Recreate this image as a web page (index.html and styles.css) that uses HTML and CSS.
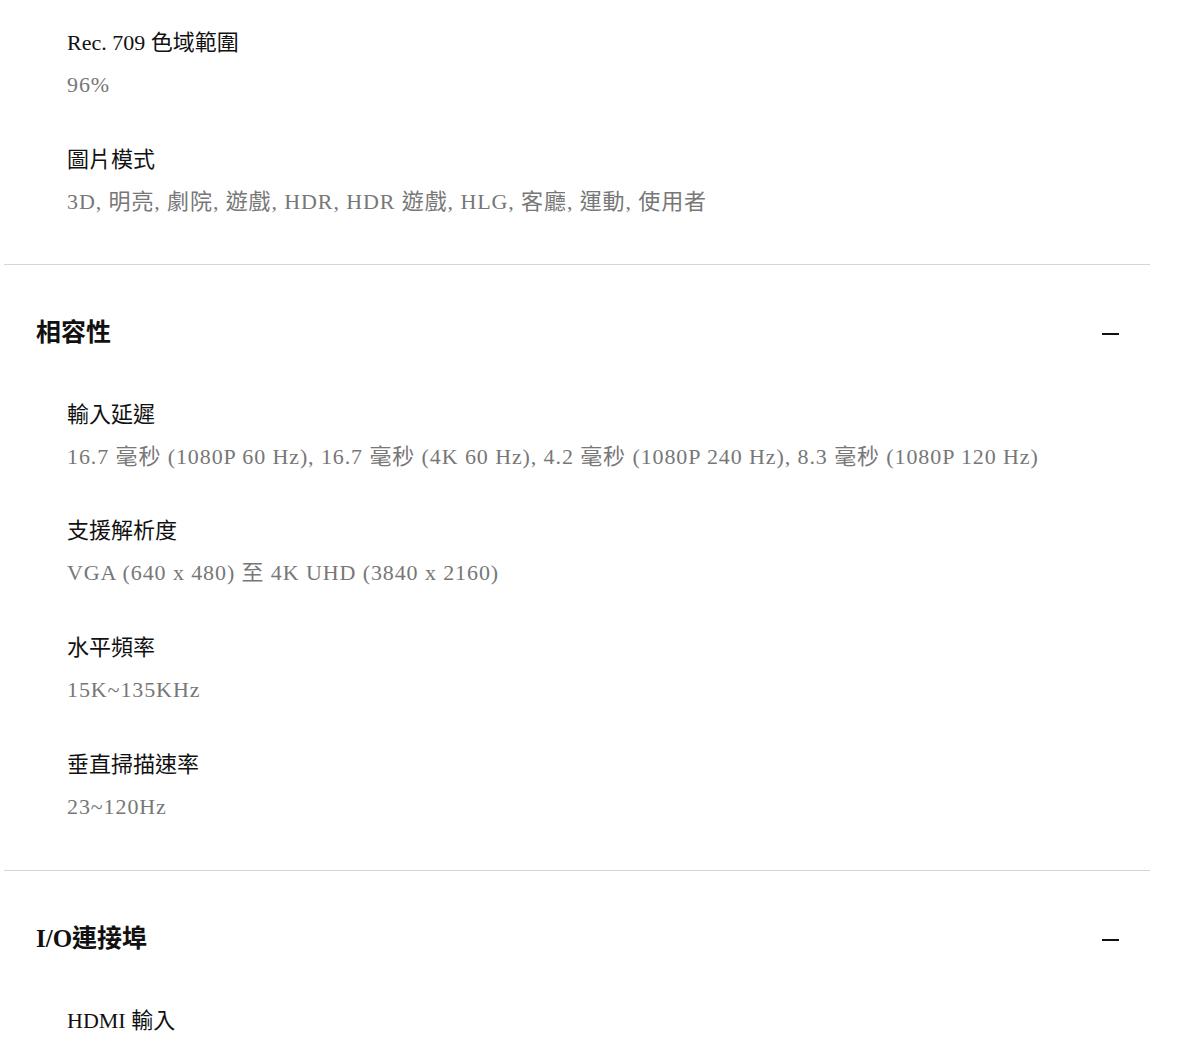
FILE: index.html
```
<!DOCTYPE html>
<html lang="zh-Hant">
  <head>
    <meta charset="UTF-8" />
    <meta name="viewport" content="width=device-width, initial-scale=1.0" />
    <title>規格</title>
    <link rel="stylesheet" href="styles.css">
  </head>
  <body>
    <div class="specs">
      <div class="section section-open">
        <div class="items">
          <div class="item">
            <p class="label">Rec. 709 色域範圍</p>
            <p class="value">96%</p>
          </div>
          <div class="item">
            <p class="label">圖片模式</p>
            <p class="value">3D, 明亮, 劇院, 遊戲, HDR, HDR 遊戲, HLG, 客廳, 運動, 使用者</p>
          </div>
        </div>
      </div>

      <div class="section">
        <div class="section-head">
          <h2>相容性</h2>
          <span class="toggle"></span>
        </div>
        <div class="items">
          <div class="item">
            <p class="label">輸入延遲</p>
            <p class="value">16.7 毫秒 (1080P 60 Hz), 16.7 毫秒 (4K 60 Hz), 4.2 毫秒 (1080P 240 Hz), 8.3 毫秒 (1080P 120 Hz)</p>
          </div>
          <div class="item">
            <p class="label">支援解析度</p>
            <p class="value">VGA (640 x 480) 至 4K UHD (3840 x 2160)</p>
          </div>
          <div class="item">
            <p class="label">水平頻率</p>
            <p class="value">15K~135KHz</p>
          </div>
          <div class="item">
            <p class="label">垂直掃描速率</p>
            <p class="value">23~120Hz</p>
          </div>
        </div>
      </div>

      <div class="section">
        <div class="section-head">
          <h2>I/O連接埠</h2>
          <span class="toggle"></span>
        </div>
        <div class="items">
          <div class="item">
            <p class="label">HDMI 輸入</p>
          </div>
        </div>
      </div>
    </div>
  </body>
</html>
```

FILE: styles.css
```
body {
  margin: 0;
  background: #fff;
  font-family: "Liberation Serif", "Noto Sans CJK TC", serif;
  color: #111;
}
.specs {
  margin-left: 4px;
  width: 1146px;
}
.section {
  border-top: 1px solid #d6d6d6;
  padding: 50px 0 48px;
}
.section-open {
  border-top: none;
  padding-top: 28px;
  padding-bottom: 47px;
}
.section-head {
  display: flex;
  justify-content: space-between;
  align-items: center;
  padding: 0 31px 0 32px;
  height: 36px;
  margin-bottom: 49px;
}
h2 {
  margin: 0;
  font-size: 25px;
  font-weight: bold;
  line-height: 36px;
}
.toggle {
  width: 17px;
  height: 2px;
  background: #111;
  margin-top: 2px;
}
.items {
  padding-left: 63px;
  display: flex;
  flex-direction: column;
  gap: 44.7px;
}
.label,
.value {
  margin: 0;
  font-size: 22px;
  line-height: 30px;
}
.value {
  color: #777;
  letter-spacing: 0.9px;
  margin-top: 12px;
}
```
